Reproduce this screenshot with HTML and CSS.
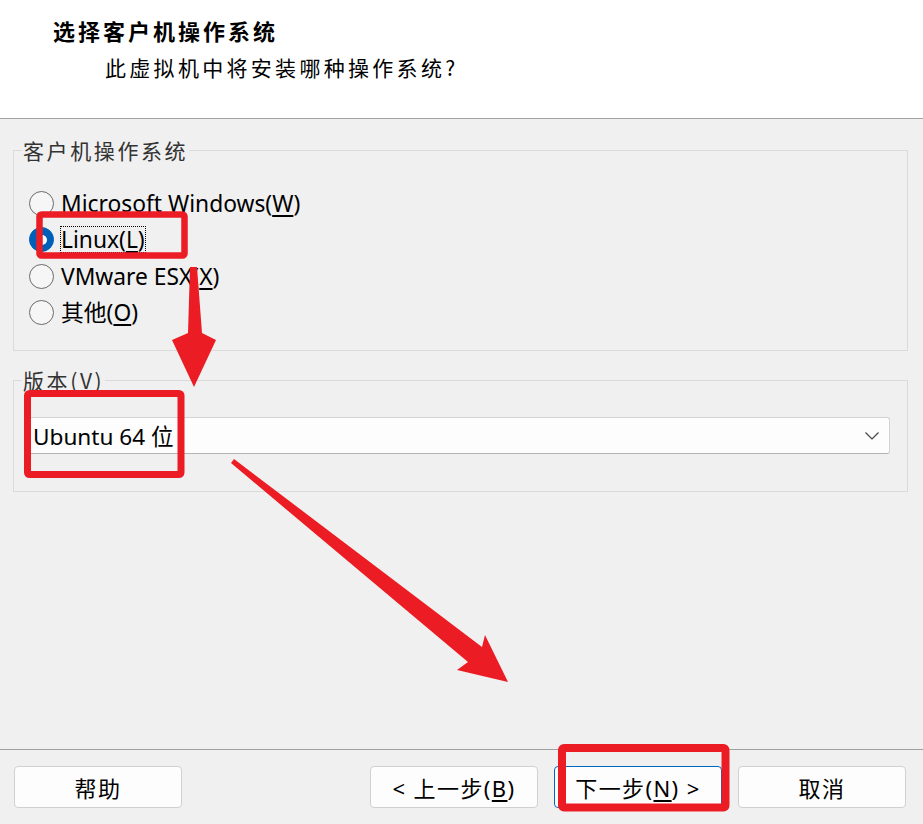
FILE: index.html
```html
<!DOCTYPE html>
<html lang="zh-CN">
<head>
<meta charset="utf-8">
<title>选择客户机操作系统</title>
<link rel="stylesheet" href="styles.css">
</head>
<body>
<div class="window">
  <header class="head">
    <div class="title">选择客户机操作系统</div>
    <div class="subtitle">此虚拟机中将安装哪种操作系统?</div>
  </header>
  <main class="content">
    <fieldset class="group os-group">
      <legend>客户机操作系统</legend>
      <label class="radio"><span class="dot"></span><span class="label">Microsoft Windows(<u>W</u>)</span></label>
      <label class="radio"><span class="dot checked"></span><span class="label focus">Linux(<u>L</u>)</span></label>
      <label class="radio"><span class="dot"></span><span class="label">VMware ESX(<u>X</u>)</span></label>
      <label class="radio"><span class="dot"></span><span class="label">其他(<u>O</u>)</span></label>
    </fieldset>
    <fieldset class="group ver-group">
      <legend>版本(<u>V</u>)</legend>
      <div class="combo">
        <span class="combo-text">Ubuntu 64 位</span>
        <svg class="chev" width="14" height="8" viewBox="0 0 14 8"><path d="M0.5 0.5 L7 7 L13.5 0.5" fill="none" stroke="#444" stroke-width="1.2"/></svg>
      </div>
    </fieldset>
  </main>
  <footer class="foot">
    <button class="btn">帮助</button>
    <div class="btn-group">
      <button class="btn">&lt; 上一步(<u>B</u>)</button>
      <button class="btn primary">下一步(<u>N</u>) &gt;</button>
      <button class="btn">取消</button>
    </div>
  </footer>
  <svg class="annot" width="923" height="824" viewBox="0 0 923 824">
    <g fill="none" stroke="#ec1c24" stroke-linejoin="round">
      <rect x="39.5" y="214.5" width="145" height="41" rx="2" stroke-width="6.5"/>
      <rect x="27.5" y="393.5" width="153.5" height="81" rx="2" stroke-width="7"/>
      <rect x="562" y="748" width="163.5" height="59.5" rx="2" stroke-width="8"/>
    </g>
    <g fill="#ec1c24">
      <polygon points="190,267 197,267 202,333 216,340 194,387 172,340 188,333"/>
      <polygon points="234,459 482,647 485,635 508,682 457,670 468,662 231,463"/>
    </g>
  </svg>
</div>
</body>
</html>
```
FILE: styles.css
```css
* { box-sizing: border-box; }
html, body { margin: 0; padding: 0; }
body {
  background: #f0f0f0;
  font-family: "Noto Sans", "Noto Sans CJK SC", sans-serif;
  color: #000;
}
.window {
  position: relative;
  width: 923px;
  height: 824px;
  display: flex;
  flex-direction: column;
  background: #f0f0f0;
  overflow: hidden;
}
.head {
  height: 119px;
  background: #fff;
  border-bottom: 1px solid #a0a0a0;
  padding: 17px 0 0 53px;
  font-family: "Noto Sans CJK SC", sans-serif;
}
.title {
  font-size: 22px;
  line-height: 26px;
  font-weight: bold;
  letter-spacing: 3px;
}
.subtitle {
  margin-top: 11px;
  margin-left: 52px;
  font-size: 21px;
  line-height: 26px;
  letter-spacing: 3.3px;
}
.content {
  flex: 1;
  display: flex;
  flex-direction: column;
}
.group {
  margin: 0 15px 0 13px;
  border: 1px solid #dadada;
  min-width: 0;
}
.group legend {
  padding: 0 1px;
  font-size: 21px;
  line-height: 24px;
  color: #333;
  letter-spacing: 2.6px;
  font-family: "Noto Sans CJK SC", sans-serif;
}
.group legend u { text-underline-offset: 3px; }
.os-group {
  margin-top: 19px;
  padding: 23px 0 19px 15px;
}
.os-group legend { margin-left: -7px; }
.radio {
  display: flex;
  align-items: center;
  height: 36.5px;
  gap: 7px;
  font-size: 22.8px;
}
.dot {
  width: 25px;
  height: 25px;
  border-radius: 50%;
  border: 1.5px solid #6b6b6b;
  background: #f6f6f6;
  flex: none;
  display: flex;
  align-items: center;
  justify-content: center;
}
.dot.checked {
  background: #005fb8;
  border-color: #005fb8;
}
.dot.checked::after {
  content: "";
  width: 10px;
  height: 10px;
  border-radius: 50%;
  background: #fff;
}
.label {
  line-height: 25px;
  white-space: nowrap;
}
.label u { text-underline-offset: 3px; }
.focus {
  outline: 1px dotted #000;
  outline-offset: 0;
}
.ver-group {
  margin-top: 17px;
  padding: 25px 17px 37px 14px;
}
.ver-group legend { margin-left: -6px; }
.combo {
  height: 37px;
  background: #fdfdfd;
  border: 1px solid #d3d3d3;
  border-bottom-color: #b4b4b4;
  border-radius: 3px;
  display: flex;
  align-items: center;
  justify-content: space-between;
  padding: 0 10px 0 4px;
}
.combo-text {
  font-size: 22.6px;
  font-family: "Noto Sans", "Noto Sans CJK SC", sans-serif;
}
.foot {
  border-top: 1px solid #a0a0a0;
  height: 75px;
  padding: 16px 17px 0 14px;
  display: flex;
  justify-content: space-between;
  align-items: flex-start;
}
.btn-group {
  display: flex;
  gap: 16px;
}
.btn {
  width: 168px;
  height: 42px;
  background: #fdfdfd;
  border: 1px solid #d0d0d0;
  border-radius: 4px;
  font-family: "Noto Sans", "Noto Sans CJK SC", sans-serif;
  font-size: 22px;
  color: #000;
  padding: 0;
  letter-spacing: 1.4px;
}
.btn u { text-underline-offset: 3px; }
.btn.primary {
  border-color: #0067c0;
}
.annot {
  position: absolute;
  left: 0;
  top: 0;
  pointer-events: none;
}
```
